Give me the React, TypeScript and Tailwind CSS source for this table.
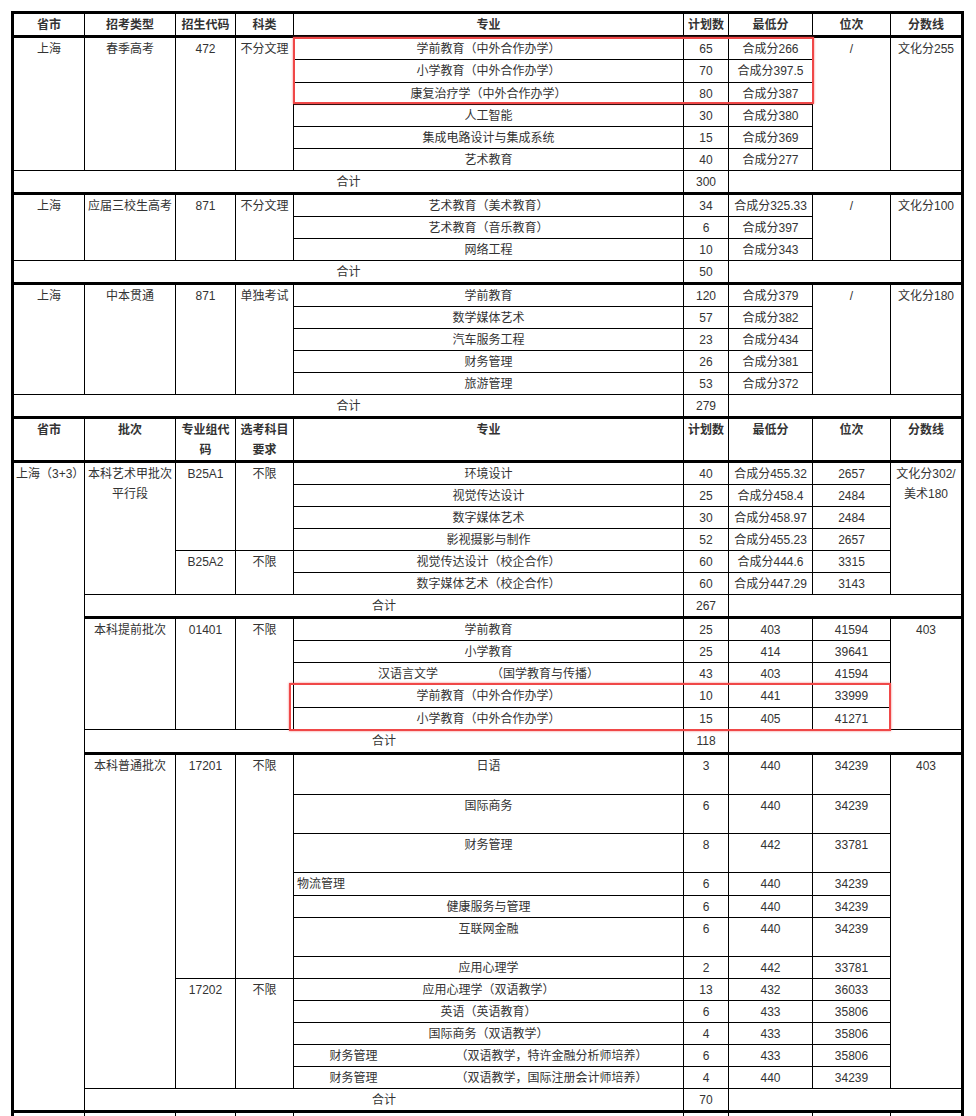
import React from "react";

type Major = {
  name: React.ReactNode;
  plan: string;
  score: string;
  rank?: string;
  h: string;
  left?: boolean;
};

const cell =
  "border border-black p-0 px-[2px] pt-[1px] align-top text-center leading-[20px]";
const head =
  "border border-black border-b-[3px] p-0 px-[1px] pt-[1px] align-top text-center leading-[20px] font-bold";
const thick = "border-b-[3px]";

function C({
  children,
  className = "",
  rowSpan,
  colSpan,
}: {
  children?: React.ReactNode;
  className?: string;
  rowSpan?: number;
  colSpan?: number;
}) {
  return (
    <td rowSpan={rowSpan} colSpan={colSpan} className={cell + " " + className}>
      {children}
    </td>
  );
}

function Gap({ name, gap, note }: { name: string; gap: string; note: string }) {
  return (
    <>
      <span>{name}</span>
      <span className={"inline-block " + gap} />
      <span>{note}</span>
    </>
  );
}

type Section = {
  info: string[];
  line: string;
  majors: Major[];
  total: string;
  totalH: string;
};

const sections: Section[] = [
  {
    info: ["上海", "春季高考", "472", "不分文理"],
    line: "文化分255",
    majors: [
      { name: "学前教育（中外合作办学）", plan: "65", score: "合成分266", h: "h-[23px]" },
      { name: "小学教育（中外合作办学）", plan: "70", score: "合成分397.5", h: "h-[23px]" },
      { name: "康复治疗学（中外合作办学）", plan: "80", score: "合成分387", h: "h-[22px]" },
      { name: "人工智能", plan: "30", score: "合成分380", h: "h-[22px]" },
      { name: "集成电路设计与集成系统", plan: "15", score: "合成分369", h: "h-[22px]" },
      { name: "艺术教育", plan: "40", score: "合成分277", h: "h-[22px]" },
    ],
    total: "300",
    totalH: "h-[23px]",
  },
  {
    info: ["上海", "应届三校生高考", "871", "不分文理"],
    line: "文化分100",
    majors: [
      { name: "艺术教育（美术教育）", plan: "34", score: "合成分325.33", h: "h-[23px]" },
      { name: "艺术教育（音乐教育）", plan: "6", score: "合成分397", h: "h-[22px]" },
      { name: "网络工程", plan: "10", score: "合成分343", h: "h-[22px]" },
    ],
    total: "50",
    totalH: "h-[23px]",
  },
  {
    info: ["上海", "中本贯通", "871", "单独考试"],
    line: "文化分180",
    majors: [
      { name: "学前教育", plan: "120", score: "合成分379", h: "h-[23px]" },
      { name: "数学媒体艺术", plan: "57", score: "合成分382", h: "h-[22px]" },
      { name: "汽车服务工程", plan: "23", score: "合成分434", h: "h-[22px]" },
      { name: "财务管理", plan: "26", score: "合成分381", h: "h-[22px]" },
      { name: "旅游管理", plan: "53", score: "合成分372", h: "h-[22px]" },
    ],
    total: "279",
    totalH: "h-[23px]",
  },
];

const art1: Major[] = [
  { name: "环境设计", plan: "40", score: "合成分455.32", rank: "2657", h: "h-[22px]" },
  { name: "视觉传达设计", plan: "25", score: "合成分458.4", rank: "2484", h: "h-[22px]" },
  { name: "数字媒体艺术", plan: "30", score: "合成分458.97", rank: "2484", h: "h-[22px]" },
  { name: "影视摄影与制作", plan: "52", score: "合成分455.23", rank: "2657", h: "h-[22px]" },
];
const art2: Major[] = [
  { name: "视觉传达设计（校企合作）", plan: "60", score: "合成分444.6", rank: "3315", h: "h-[22px]" },
  { name: "数字媒体艺术（校企合作）", plan: "60", score: "合成分447.29", rank: "3143", h: "h-[22px]" },
];
const early: Major[] = [
  { name: "学前教育", plan: "25", score: "403", rank: "41594", h: "h-[23px]" },
  { name: "小学教育", plan: "25", score: "414", rank: "39641", h: "h-[22px]" },
  {
    name: <Gap name="汉语言文学" gap="w-[53px]" note="（国学教育与传播）" />,
    plan: "43",
    score: "403",
    rank: "41594",
    h: "h-[22px]",
  },
  { name: "学前教育（中外合作办学）", plan: "10", score: "441", rank: "33999", h: "h-[23px]" },
  { name: "小学教育（中外合作办学）", plan: "15", score: "405", rank: "41271", h: "h-[22px]" },
];
const normal1: Major[] = [
  { name: "日语", plan: "3", score: "440", rank: "34239", h: "h-[41px]" },
  { name: "国际商务", plan: "6", score: "440", rank: "34239", h: "h-[39px]" },
  { name: "财务管理", plan: "8", score: "442", rank: "33781", h: "h-[39px]" },
  { name: "物流管理", plan: "6", score: "440", rank: "34239", h: "h-[23px]", left: true },
  { name: "健康服务与管理", plan: "6", score: "440", rank: "34239", h: "h-[22px]" },
  { name: "互联网金融", plan: "6", score: "440", rank: "34239", h: "h-[39px]" },
  { name: "应用心理学", plan: "2", score: "442", rank: "33781", h: "h-[22px]" },
];
const normal2: Major[] = [
  { name: "应用心理学（双语教学）", plan: "13", score: "432", rank: "36033", h: "h-[22px]" },
  { name: "英语（英语教育）", plan: "6", score: "433", rank: "35806", h: "h-[22px]" },
  { name: "国际商务（双语教学）", plan: "4", score: "433", rank: "35806", h: "h-[22px]" },
  {
    name: <Gap name="财务管理" gap="w-[78px]" note="（双语教学，特许金融分析师培养）" />,
    plan: "6",
    score: "433",
    rank: "35806",
    h: "h-[22px]",
  },
  {
    name: <Gap name="财务管理" gap="w-[78px]" note="（双语教学，国际注册会计师培养）" />,
    plan: "4",
    score: "440",
    rank: "34239",
    h: "h-[22px]",
  },
];

function MajorCells({ m }: { m: Major }) {
  return (
    <>
      <C className={m.left ? "text-left pl-[3px]" : ""}>{m.name}</C>
      <C>{m.plan}</C>
      <C>{m.score}</C>
    </>
  );
}

function Total({ span, value, h }: { span: number; value: string; h: string }) {
  return (
    <tr className={h}>
      <C colSpan={span} className={thick}>
        合计
      </C>
      <C className={thick}>{value}</C>
      <C colSpan={3} className={thick} />
    </tr>
  );
}

export default function App() {
  const head1 = ["省市", "招考类型", "招生代码", "科类", "专业", "计划数", "最低分", "位次", "分数线"];
  const head2 = ["省市", "批次", "专业组代码", "选考科目要求", "专业", "计划数", "最低分", "位次", "分数线"];

  return (
    <div className="relative h-[1116px] w-[976px] overflow-hidden bg-white font-['Liberation_Sans','Noto_Sans_CJK_SC',sans-serif] text-[12px] text-[#333]">
      <div className="pl-[11px] pt-[11px]">
        <table className="w-[953px] table-fixed border-collapse border-[3px] border-black">
          <colgroup>
            <col className="w-[72px]" />
            <col className="w-[91px]" />
            <col className="w-[60px]" />
            <col className="w-[58px]" />
            <col className="w-[390px]" />
            <col className="w-[45px]" />
            <col className="w-[84px]" />
            <col className="w-[78px]" />
            <col className="w-[72px]" />
          </colgroup>
          <tbody>
            <tr className="h-[22px]">
              {head1.map((h) => (
                <th key={h} className={head}>
                  {h}
                </th>
              ))}
            </tr>

            {sections.map((s, si) => (
              <React.Fragment key={si}>
                {s.majors.map((m, i) => (
                  <tr key={i} className={m.h}>
                    {i === 0 &&
                      s.info.map((t, k) => (
                        <C key={k} rowSpan={s.majors.length}>
                          {t}
                        </C>
                      ))}
                    <MajorCells m={m} />
                    {i === 0 && (
                      <>
                        <C rowSpan={s.majors.length}>/</C>
                        <C rowSpan={s.majors.length}>{s.line}</C>
                      </>
                    )}
                  </tr>
                ))}
                <Total span={5} value={s.total} h={s.totalH} />
              </React.Fragment>
            ))}

            <tr className="h-[42px]">
              {head2.map((h) => (
                <th key={h} className={head}>
                  {h}
                </th>
              ))}
            </tr>

            {/* 本科艺术甲批次 */}
            {art1.map((m, i) => (
              <tr key={"a1" + i} className={m.h}>
                {i === 0 && (
                  <>
                    <C rowSpan={26} className="whitespace-nowrap border-b-[3px]">
                      上海（3+3）
                    </C>
                    <C rowSpan={6}>本科艺术甲批次平行段</C>
                    <C rowSpan={4}>B25A1</C>
                    <C rowSpan={4}>不限</C>
                  </>
                )}
                <MajorCells m={m} />
                <C>{m.rank}</C>
                {i === 0 && (
                  <C rowSpan={6}>
                    文化分302/
                    <br />
                    美术180
                  </C>
                )}
              </tr>
            ))}
            {art2.map((m, i) => (
              <tr key={"a2" + i} className={m.h}>
                {i === 0 && (
                  <>
                    <C rowSpan={2}>B25A2</C>
                    <C rowSpan={2}>不限</C>
                  </>
                )}
                <MajorCells m={m} />
                <C>{m.rank}</C>
              </tr>
            ))}
            <Total span={4} value="267" h="h-[22px]" />

            {/* 本科提前批次 */}
            {early.map((m, i) => (
              <tr key={"e" + i} className={m.h}>
                {i === 0 && (
                  <>
                    <C rowSpan={5}>本科提前批次</C>
                    <C rowSpan={5}>01401</C>
                    <C rowSpan={5}>不限</C>
                  </>
                )}
                <MajorCells m={m} />
                <C>{m.rank}</C>
                {i === 0 && <C rowSpan={5}>403</C>}
              </tr>
            ))}
            <Total span={4} value="118" h="h-[24px]" />

            {/* 本科普通批次 */}
            {normal1.map((m, i) => (
              <tr key={"n1" + i} className={m.h}>
                {i === 0 && (
                  <>
                    <C rowSpan={12}>本科普通批次</C>
                    <C rowSpan={7}>17201</C>
                    <C rowSpan={7}>不限</C>
                  </>
                )}
                <MajorCells m={m} />
                <C>{m.rank}</C>
                {i === 0 && <C rowSpan={12}>403</C>}
              </tr>
            ))}
            {normal2.map((m, i) => (
              <tr key={"n2" + i} className={m.h}>
                {i === 0 && (
                  <>
                    <C rowSpan={5}>17202</C>
                    <C rowSpan={5}>不限</C>
                  </>
                )}
                <MajorCells m={m} />
                <C>{m.rank}</C>
              </tr>
            ))}
            <Total span={4} value="70" h="h-[23px]" />

            <tr className="h-[22px]">
              {head1.map((h) => (
                <C key={h} />
              ))}
            </tr>
          </tbody>
        </table>
      </div>

      {/* red highlight boxes */}
      <div className="absolute left-[293px] top-[37px] h-[67px] w-[521px] border-2 border-[#f04848] shadow-[0_0_2px_rgba(240,72,72,0.7)]" />
      <div className="absolute left-[289px] top-[683px] h-[48px] w-[602px] border-2 border-[#f04848] shadow-[0_0_2px_rgba(240,72,72,0.7)]" />
    </div>
  );
}
